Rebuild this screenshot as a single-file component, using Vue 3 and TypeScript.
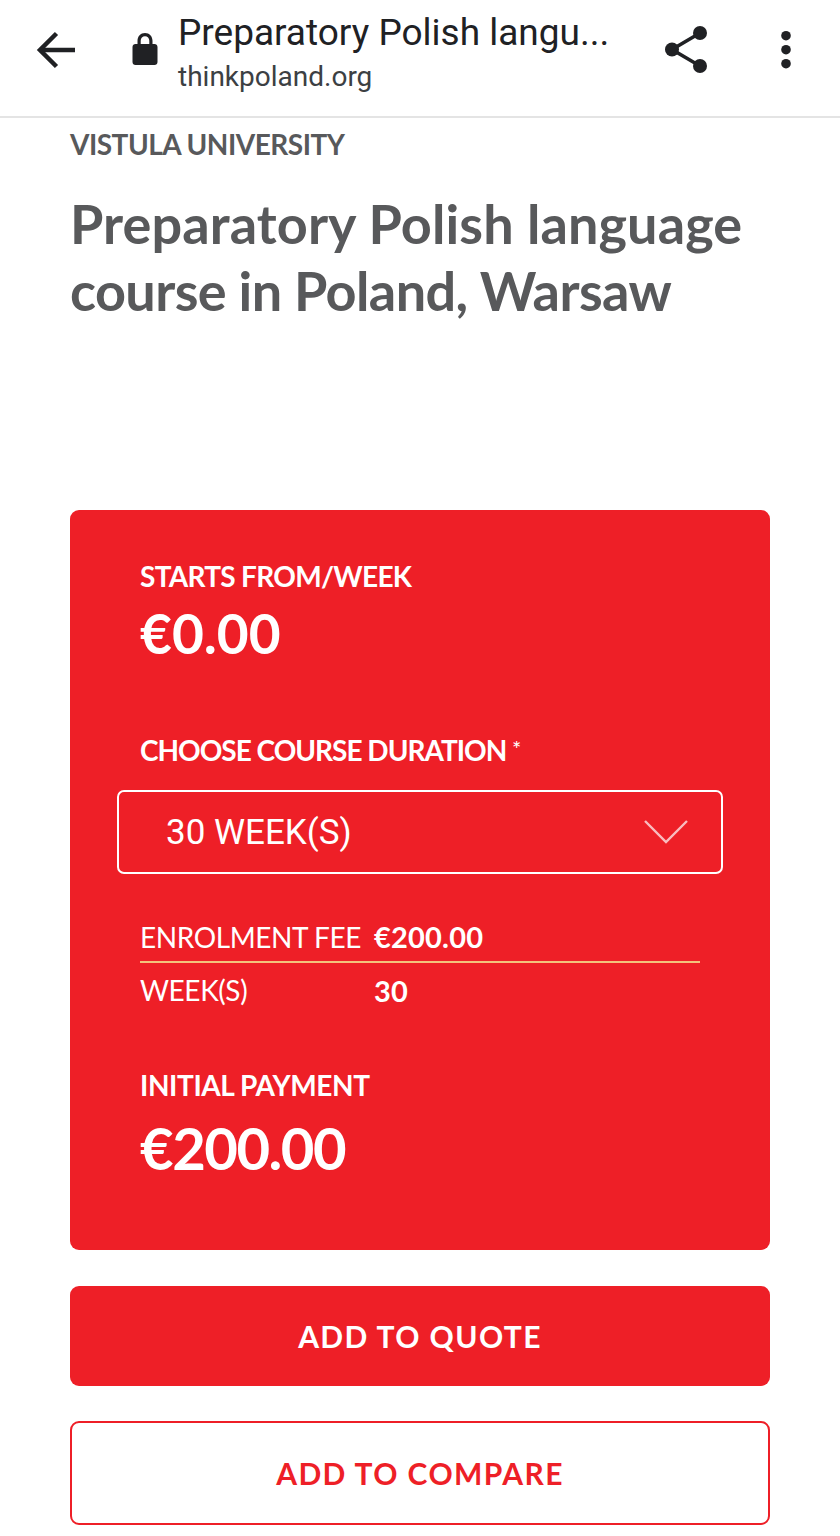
<script setup lang="ts">
const rows = [
  { label: 'ENROLMENT FEE', value: '€200.00' },
  { label: 'WEEK(S)', value: '30' },
]
</script>

<template>
  <div class="page">
    <header class="bar">
      <svg class="back" width="40" height="40" viewBox="0 0 40 40" fill="none" stroke="#202124" stroke-width="4.500">
        <path d="M39 20H5" />
        <path d="M20.500 3.500L4 20l16.500 16.500" />
      </svg>
      <svg class="lock" width="26" height="34" viewBox="0 0 26 34">
        <path fill="#202124" d="M13 1c-4.400 0-7.500 3.300-7.500 7.800V12H3.500C1.800 12 .5 13.300 .5 15v15c0 1.700 1.300 3 3 3h19c1.700 0 3-1.300 3-3V15c0-1.700-1.300-3-3-3h-2V8.800C20.500 4.300 17.400 1 13 1zm0 3.200c2.500 0 4.300 1.900 4.300 4.600V12H8.700V8.800c0-2.700 1.800-4.600 4.300-4.600z" />
      </svg>
      <div class="titles">
        <div class="page-title">Preparatory Polish langu...</div>
        <div class="domain">thinkpoland.org</div>
      </div>
      <svg class="share" width="44" height="48" viewBox="0 0 44 48" fill="#202124" stroke="#202124">
        <path d="M36 7L8 23.500 36 40" fill="none" stroke-width="3.600" />
        <circle cx="36" cy="7" r="7" stroke="none" />
        <circle cx="8" cy="23.500" r="7" stroke="none" />
        <circle cx="36" cy="40" r="7" stroke="none" />
      </svg>
      <svg class="more" width="12" height="40" viewBox="0 0 12 40" fill="#202124">
        <circle cx="6" cy="5.700" r="4.800" />
        <circle cx="6" cy="19.700" r="4.800" />
        <circle cx="6" cy="33.700" r="4.800" />
      </svg>
    </header>

    <main class="content">
      <div class="school">VISTULA UNIVERSITY</div>
      <h1 class="heading">
        <span class="line-one">Preparatory Polish language</span>
        <span class="line-two">course in Poland, Warsaw</span>
      </h1>

      <section class="card">
        <div class="label first">STARTS FROM/WEEK</div>
        <div class="price small">€0.00</div>
        <div class="label duration">CHOOSE COURSE DURATION <span class="star">*</span></div>
        <div class="select">
          <span>30 WEEK(S)</span>
          <svg width="44" height="24" viewBox="0 0 44 24" fill="none" stroke="#f9bcbf" stroke-width="2.400">
            <path d="M1 1l21 21L43 1" />
          </svg>
        </div>
        <div class="rows">
          <div v-for="row in rows" :key="row.label" class="row">
            <span class="row-label">{{ row.label }}</span>
            <span class="row-value">{{ row.value }}</span>
          </div>
        </div>
        <div class="label initial">INITIAL PAYMENT</div>
        <div class="price large">€200.00</div>
      </section>

      <button class="btn solid" type="button">ADD TO QUOTE</button>
      <button class="btn outline" type="button">ADD TO COMPARE</button>
    </main>
  </div>
</template>

<style>
html, body { margin: 0; background: #fff; }
</style>

<style scoped>
.page {
  width: 840px;
  height: 1536px;
  overflow: hidden;
  background: #fff;
  font-family: "Lato", "Noto Sans", sans-serif;
}
.bar {
  box-sizing: border-box;
  height: 118px;
  border-bottom: 2px solid #e4e4e4;
  display: flex;
  align-items: flex-start;
  font-family: "Roboto", sans-serif;
  color: #202124;
}
.back { margin: 30px 0 0 36px; }
.lock { margin: 32px 0 0 56px; }
.titles { margin: 9px 0 0 20px; width: 458px; }
.page-title { font-size: 37px; line-height: 48px; white-space: nowrap; }
.domain { font-size: 28px; line-height: 36px; margin-top: 2px; color: #3c4043; }
.share { margin: 26px 0 0 28px; }
.more { margin: 30px 0 0 72px; }

.content { padding: 0 70px; }
.school {
  font-size: 28px;
  line-height: 36px;
  font-weight: 700;
  color: #58595b;
  margin-top: 8px;
  letter-spacing: -0.5px;
}
.heading {
  margin: 28px 0 0;
  font-size: 54px;
  line-height: 67px;
  font-weight: 700;
  color: #58595b;
}
.line-one, .line-two { display: block; white-space: nowrap; }
.line-one { letter-spacing: 0.1px; }
.line-two { letter-spacing: -0.6px; }
.card {
  box-sizing: border-box;
  height: 740px;
  margin-top: 186px;
  background: #ee1f27;
  border-radius: 9px;
  padding: 48px 47px 0;
  color: #fff;
}
.label {
  font-size: 28px;
  line-height: 36px;
  font-weight: 700;
  margin-left: 23px;
  letter-spacing: -0.4px;
}
.first { letter-spacing: -0.7px; }
.price { margin-left: 23px; font-weight: 700; }
.price.small { font-size: 55px; line-height: 60px; margin-top: 9px; }
.duration { margin-top: 68px; letter-spacing: -1px; }
.star { font-size: 22px; font-weight: 400; vertical-align: 4px; letter-spacing: 0; }
.select {
  box-sizing: border-box;
  height: 84px;
  margin-top: 22px;
  border: 2px solid #fff;
  border-radius: 7px;
  padding: 0 33px 0 47px;
  display: flex;
  align-items: center;
  justify-content: space-between;
  font-family: "Roboto", sans-serif;
  font-size: 35px;
}
.rows { margin: 38px 23px 0; }
.row {
  display: flex;
  align-items: center;
  height: 54px;
  font-size: 28px;
}
.row:first-child { height: 49px; border-bottom: 2px solid #f4c27c; }
.row-label { width: 234px; font-weight: 400; letter-spacing: -0.4px; white-space: nowrap; }
.row-value { font-weight: 700; font-size: 29px; letter-spacing: 0.2px; }
.initial { margin-top: 50px; }
.price.large { font-size: 58px; line-height: 66px; margin-top: 12px; letter-spacing: -1.5px; }
.btn {
  box-sizing: border-box;
  display: block;
  width: 100%;
  border-radius: 9px;
  font-family: inherit;
  font-size: 30px;
  font-weight: 700;
  letter-spacing: 1.4px;
}
.solid {
  height: 100px;
  margin-top: 36px;
  background: #ee1f27;
  border: 0;
  color: #fff;
}
.outline {
  height: 104px;
  margin-top: 35px;
  background: #fff;
  border: 2px solid #ee1f27;
  color: #ee1f27;
}
</style>
